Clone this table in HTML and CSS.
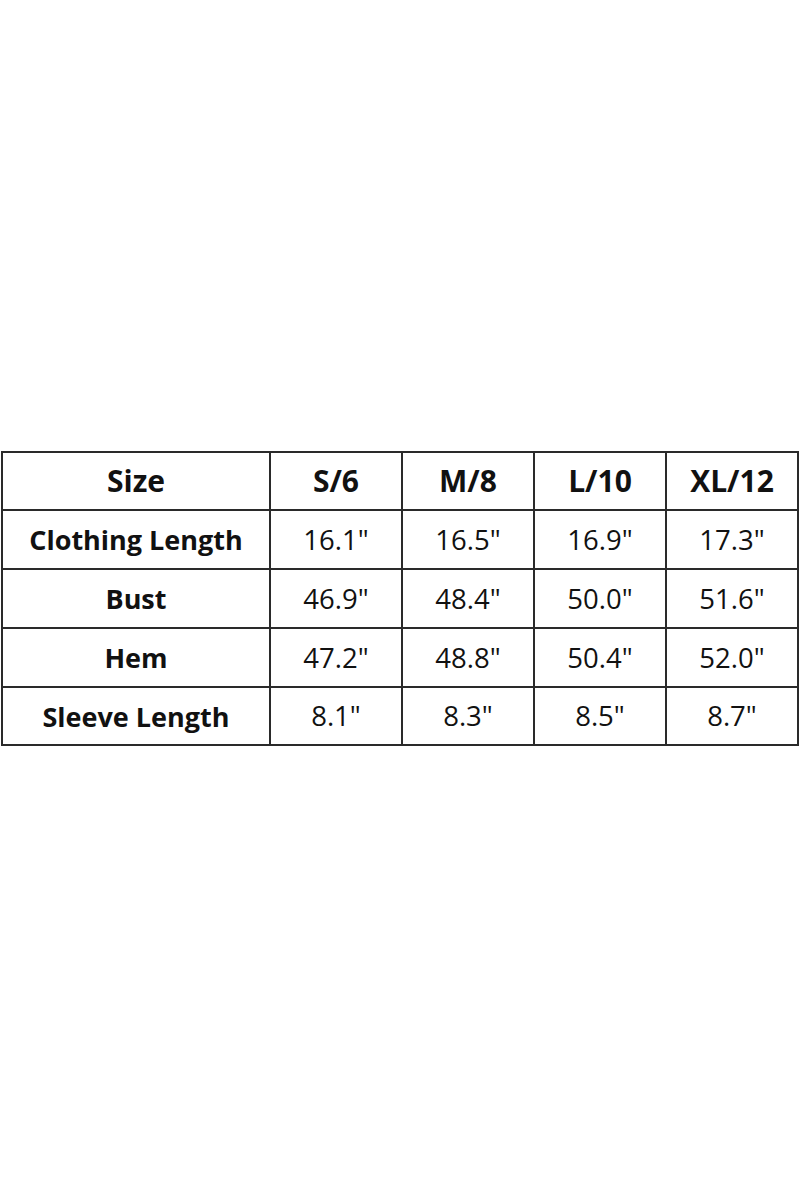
FILE: index.html
```html
<!DOCTYPE html>
<html>
<head>
<meta charset="utf-8">
<link rel="stylesheet" href="styles.css">
</head>
<body>
<div class="page">
  <table class="size-table">
    <colgroup>
      <col class="c-label"><col class="c-size"><col class="c-size"><col class="c-size"><col class="c-size">
    </colgroup>
    <thead>
      <tr><th>Size</th><th>S/6</th><th>M/8</th><th>L/10</th><th>XL/12</th></tr>
    </thead>
    <tbody>
      <tr><th>Clothing Length</th><td>16.1"</td><td>16.5"</td><td>16.9"</td><td>17.3"</td></tr>
      <tr><th>Bust</th><td>46.9"</td><td>48.4"</td><td>50.0"</td><td>51.6"</td></tr>
      <tr><th>Hem</th><td>47.2"</td><td>48.8"</td><td>50.4"</td><td>52.0"</td></tr>
      <tr><th>Sleeve Length</th><td>8.1"</td><td>8.3"</td><td>8.5"</td><td>8.7"</td></tr>
    </tbody>
  </table>
</div>
</body>
</html>
```
FILE: styles.css
```css
html, body {
  margin: 0;
  padding: 0;
  background: #fff;
}
.page {
  height: 1200px;
  display: flex;
  align-items: center;
  padding-left: 1px;
}
.size-table {
  border-collapse: collapse;
  table-layout: fixed;
  width: 797px;
  font-family: "Open Sans", "Noto Sans", sans-serif;
  color: #111;
  margin-top: -3px;
}
.c-label { width: 268px; }
.c-size { width: 132px; }
.size-table th,
.size-table td {
  border: 2px solid #2a2a2a;
  height: 56.8px;
  padding: 0;
  text-align: center;
  vertical-align: middle;
  line-height: 1;
}
.size-table thead th {
  font-size: 30px;
  font-weight: 700;
}
.size-table tbody th {
  font-size: 27px;
  font-weight: 700;
}
.size-table td {
  font-size: 27.5px;
  font-weight: 400;
}
```
